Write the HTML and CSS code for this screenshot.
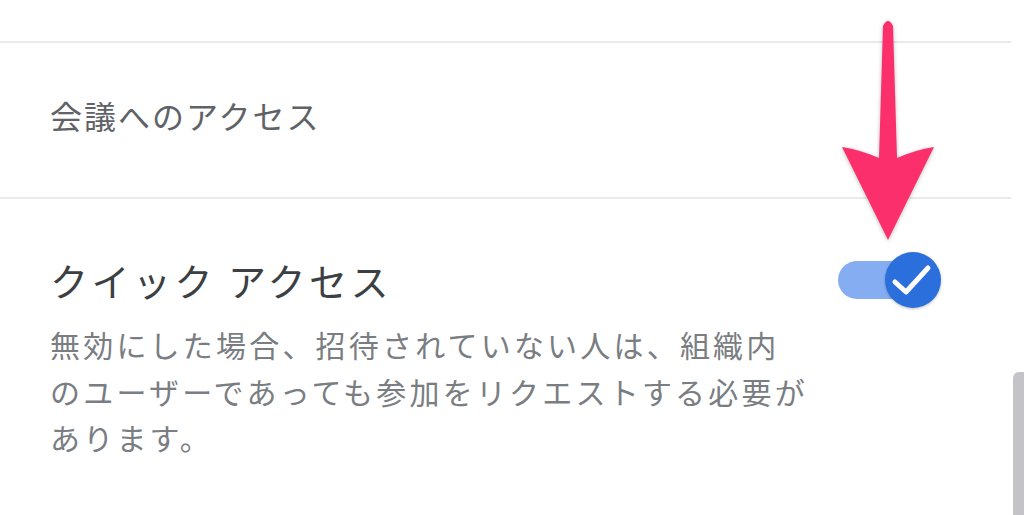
FILE: index.html
```html
<!DOCTYPE html>
<html lang="ja">

<head>
    <meta charset="UTF-8">
    <meta name="viewport" content="width=device-width, initial-scale=1.0">
    <title>会議へのアクセス</title>
    <link rel="stylesheet" href="styles.css">
</head>

<body>
    <div class="page">
        <div class="panel">
            <div class="top-space"></div>
            <div class="divider"></div>
            <div class="section-header">会議へのアクセス</div>
            <div class="divider"></div>

            <div class="setting">
                <div class="setting-text">
                    <div class="setting-title">クイック アクセス</div>
                    <div class="setting-desc">無効にした場合、招待されていない人は、組織内<br>のユーザーであっても参加をリクエストする必要が<br>あります。</div>
                </div>
                <div class="toggle">
                    <div class="toggle-track"></div>
                    <div class="toggle-knob">
                        <svg width="56" height="56" viewBox="0 0 56 56">
                            <path d="M10 30 L21 40 L43 16" fill="none" stroke="#fff" stroke-width="5" stroke-linecap="round" stroke-linejoin="round"/>
                        </svg>
                    </div>
                </div>
            </div>
        </div>
        <div class="scroll-track">
            <div class="scroll-thumb"></div>
        </div>
    </div>

    <!-- annotation arrow pointing at the toggle -->
    <svg class="arrow" width="120" height="260" viewBox="0 0 120 260">
        <path d="M41 26 Q46 16 51 26 L55 158 Q73 150 92 147 L46 240 L0 147 Q19 150 37 158 Z" fill="#fb2f6c"/>
    </svg>
</body>

</html>
```

FILE: styles.css
```css
body {
    margin: 0;
    background-color: #fff;
    font-family: "Noto Sans CJK JP", "Noto Sans", sans-serif;
    overflow: hidden;
}

.page {
    display: flex;
    width: 1024px;
    height: 515px;
}

.panel {
    width: 1013px;
}

.top-space {
    height: 41px;
}

.divider {
    border-top: 2px solid #eaeaea;
}

.section-header {
    height: 144px;
    padding: 0 0 10px 50px;
    display: flex;
    align-items: center;
    font-size: 32px;
    letter-spacing: 2px;
    color: #5f6368;
}

.setting {
    display: flex;
    justify-content: space-between;
    align-items: flex-start;
    padding: 56px 70px 0 50px;
}

.setting-title {
    font-size: 38px;
    line-height: 50px;
    letter-spacing: 3.5px;
    color: #3c4043;
}

.setting-desc {
    margin-top: 16px;
    font-size: 30px;
    line-height: 46.5px;
    letter-spacing: 3.2px;
    color: #7a7d82;
}

/* Toggle switch (on state) */
.toggle {
    display: flex;
    align-items: center;
    margin-top: -3px;
}

.toggle-track {
    width: 75px;
    height: 38px;
    border-radius: 19px;
    background-color: #85aef2;
}

.toggle-knob {
    width: 56px;
    height: 56px;
    margin-left: -28px;
    border-radius: 50%;
    background-color: #2a6fdc;
    box-shadow: 0 1px 3px rgba(0, 0, 0, 0.25);
}

.toggle-knob svg {
    display: block;
}

.scroll-track {
    width: 11px;
    padding-left: 2px;
}

.scroll-thumb {
    margin-top: 372px;
    height: 150px;
    border-radius: 6px 0 0 0;
    background-color: #c4c4c8;
}

.arrow {
    position: absolute;
    left: 842px;
    top: 0;
    filter: drop-shadow(0 1px 2px rgba(0, 0, 0, 0.25));
}
```
